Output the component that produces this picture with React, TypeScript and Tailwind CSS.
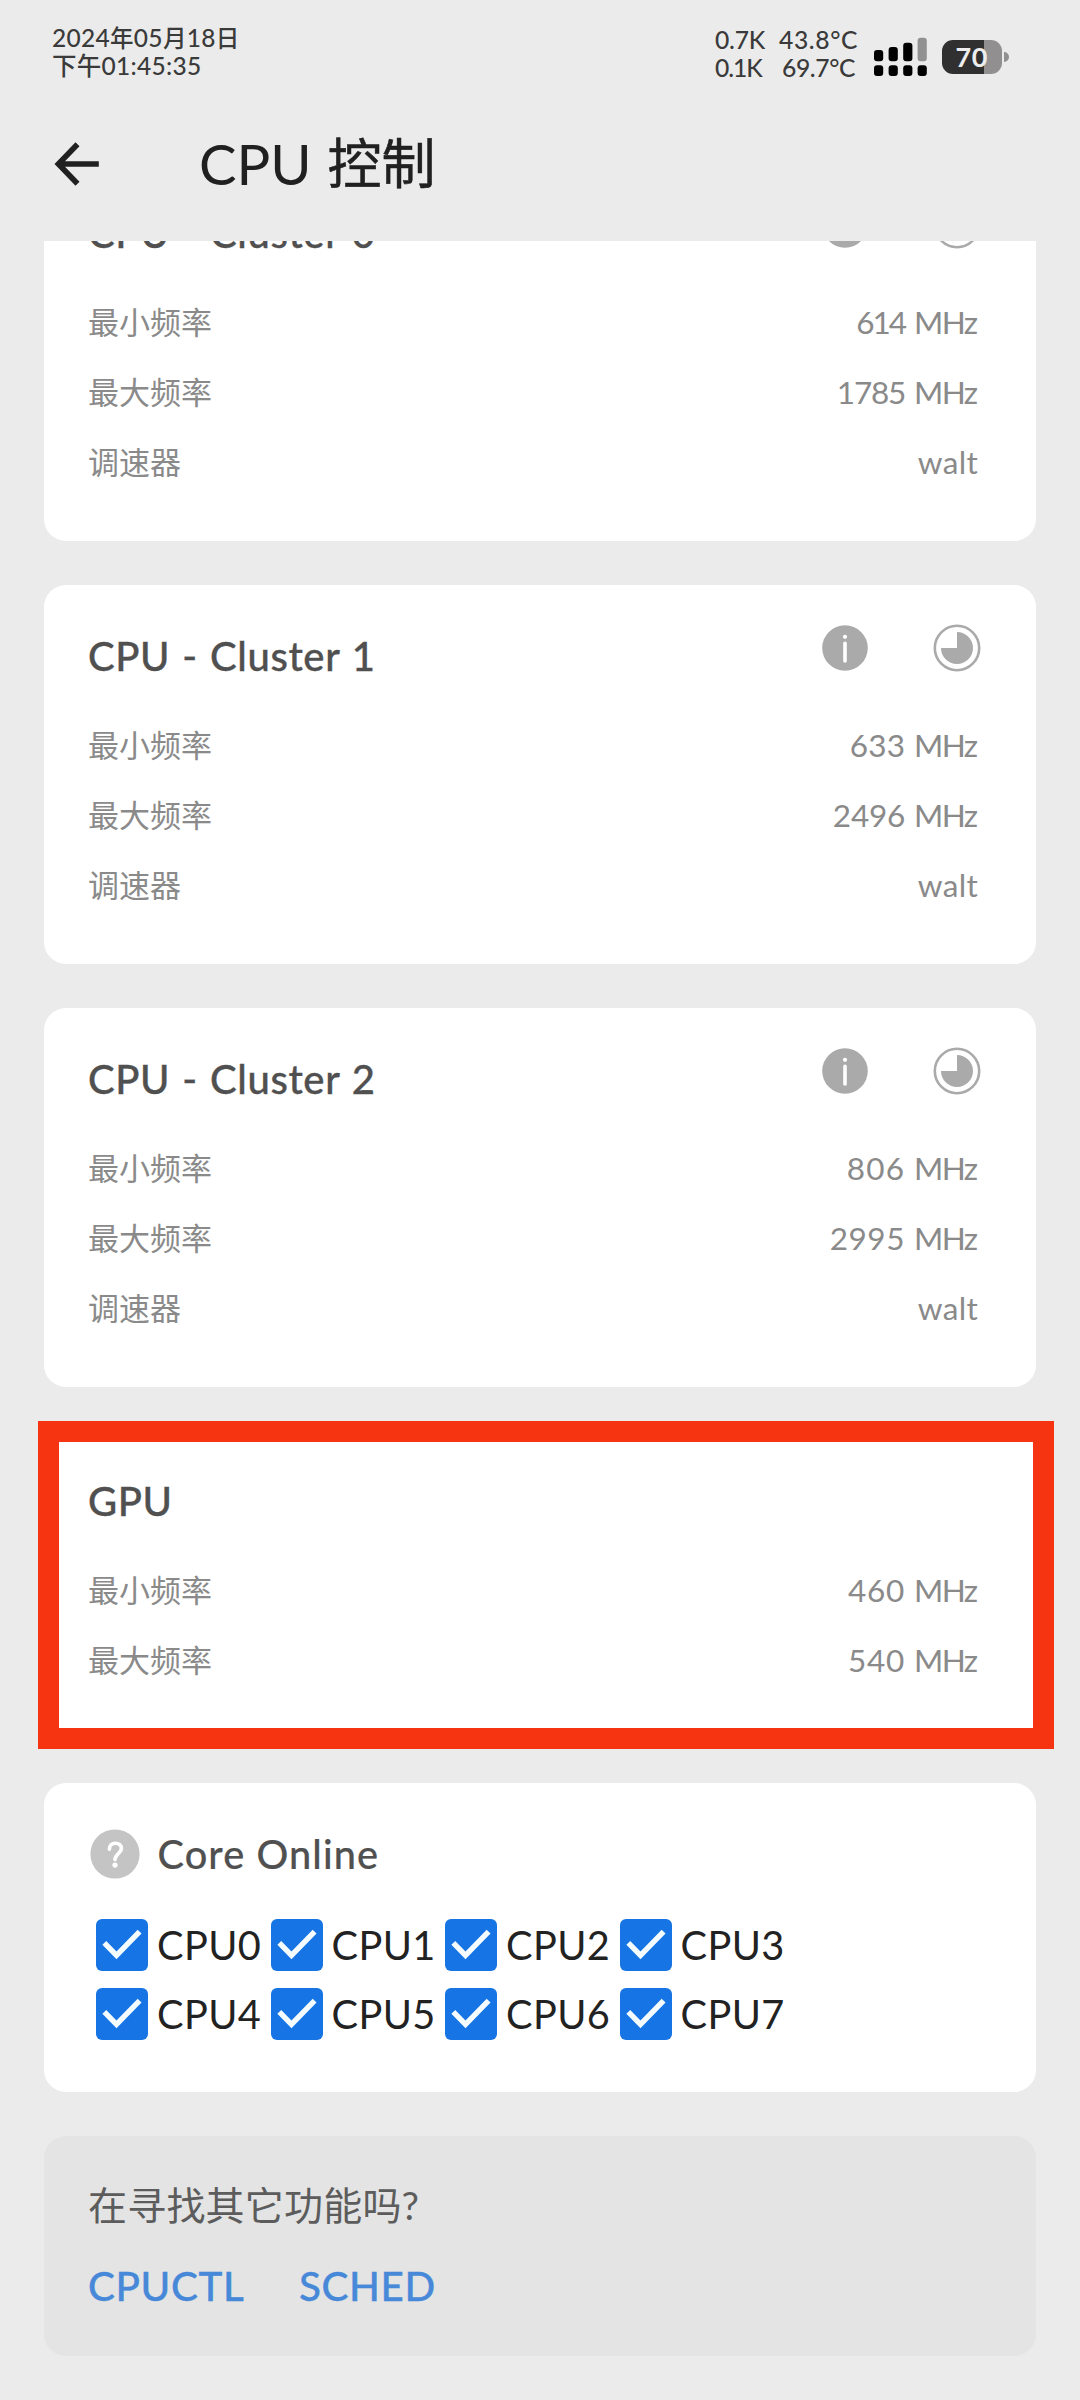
import React from 'react';

type Row = { label: string; value: string; unit?: string; spacing: string };

const clusters: { title: string; rows: Row[] }[] = [
  {
    title: 'CPU - Cluster 0',
    rows: [
      { label: '最小频率', value: '614', unit: 'MHz', spacing: 'tracking-[-2px]' },
      { label: '最大频率', value: '1785', unit: 'MHz', spacing: 'tracking-[-1.2px]' },
      { label: '调速器', value: 'walt', spacing: 'tracking-[0.3px]' },
    ],
  },
  {
    title: 'CPU - Cluster 1',
    rows: [
      { label: '最小频率', value: '633', unit: 'MHz', spacing: 'tracking-[0.2px]' },
      { label: '最大频率', value: '2496', unit: 'MHz', spacing: 'tracking-[-0.2px]' },
      { label: '调速器', value: 'walt', spacing: 'tracking-[0.3px]' },
    ],
  },
  {
    title: 'CPU - Cluster 2',
    rows: [
      { label: '最小频率', value: '806', unit: 'MHz', spacing: 'tracking-[1.2px]' },
      { label: '最大频率', value: '2995', unit: 'MHz', spacing: 'tracking-[0.6px]' },
      { label: '调速器', value: 'walt', spacing: 'tracking-[0.3px]' },
    ],
  },
];

const gpuRows: Row[] = [
  { label: '最小频率', value: '460', unit: 'MHz', spacing: 'tracking-[0.8px]' },
  { label: '最大频率', value: '540', unit: 'MHz', spacing: 'tracking-[0.8px]' },
];

const cores = ['CPU0', 'CPU1', 'CPU2', 'CPU3', 'CPU4', 'CPU5', 'CPU6', 'CPU7'];

function SignalIcon() {
  return (
    <svg width="54" height="40" viewBox="0 0 54 40">
      <rect x="0" y="13" width="9.2" height="11.3" rx="3" />
      <rect x="14.6" y="10" width="9.2" height="14.3" rx="3" />
      <rect x="29.2" y="5.7" width="9.2" height="18.6" rx="3" />
      <rect x="43.6" y="0.7" width="9.2" height="23.6" rx="3" fill="#919191" />
      <rect x="0" y="28.3" width="9.2" height="10.7" rx="3" />
      <rect x="14.6" y="28.3" width="9.2" height="10.7" rx="3" />
      <rect x="29.2" y="28.3" width="9.2" height="10.7" rx="3" />
      <rect x="43.6" y="28.3" width="9.2" height="10.7" rx="3" />
    </svg>
  );
}

function Battery() {
  return (
    <div className="flex items-center">
      <div className="flex h-[34px] w-[59.5px] items-center justify-center rounded-[11px] bg-linear-to-r from-[#303030] from-70% to-[#918f90] to-70% pb-[1px] text-[27px] leading-none font-bold tracking-[0.5px] text-[#ededed]">
        70
      </div>
      <div className="ml-[2.5px] h-[10px] w-[5px] rounded-r-full bg-[#919191]" />
    </div>
  );
}

function StatusBar() {
  return (
    <div className="flex h-[96px] items-start justify-between pr-[71px] pl-[52px] font-medium text-[#3a3a3a]">
      <div className="pt-[24px] text-[24.5px] leading-[28px]">
        <div className="tracking-[0.3px]">
          2024<span className="text-[23.5px]">年</span>05<span className="text-[23.5px]">月</span>18
          <span className="text-[23.5px]">日</span>
        </div>
        <div className="tracking-[0.3px]">下午01:45:35</div>
      </div>
      <div className="flex">
        <div className="w-[64px] pt-[26px] text-[24.7px] leading-[28px] [font-kerning:none]">
          <div className="tracking-[-0.2px]">0.7K</div>
          <div className="tracking-[-1.1px]">0.1K</div>
        </div>
        <div className="w-[95px] pt-[26px] text-[24.7px] leading-[28px]">
          <div className="tracking-[0.6px]">43.8°C</div>
          <div className="pl-[3px] tracking-[-0.4px]">69.7°C</div>
        </div>
        <div className="pt-[37px]">
          <SignalIcon />
        </div>
        <div className="pt-[40px] pl-[14px]">
          <Battery />
        </div>
      </div>
    </div>
  );
}

function InfoIcon() {
  return (
    <svg width="46" height="46" viewBox="0 0 46 46">
      <circle cx="23" cy="23" r="22.8" fill="#aaaaaa" />
      <circle cx="23" cy="11.8" r="2.1" fill="#fff" />
      <path d="M23 18.2V36" stroke="#fff" strokeWidth="3.6" strokeLinecap="round" />
    </svg>
  );
}

function PieIcon() {
  return (
    <svg width="48" height="48" viewBox="0 0 48 48">
      <circle cx="24" cy="24" r="22.2" fill="none" stroke="#aaaaaa" strokeWidth="2.6" />
      <path d="M24 24V8A16 16 0 1 1 8 24Z" fill="#aaaaaa" />
    </svg>
  );
}

function FrequencyRow({ row }: { row: Row }) {
  return (
    <div className="flex h-[70px] items-center justify-between text-[#8a8a8a]">
      <span className="pb-[1px] text-[31px] leading-[40px]">{row.label}</span>
      <span className="flex gap-[9px] text-[31.5px] leading-[40px]">
        <span className={row.spacing}>{row.value}</span>
        {row.unit && <span className="mr-[1.5px] tracking-[-1.6px]">{row.unit}</span>}
      </span>
    </div>
  );
}

function CardTitle({ children }: { children: React.ReactNode }) {
  return (
    <h2 className="text-[40px] leading-[63px] font-medium tracking-[0.6px] text-[#505050] [-webkit-text-stroke:0.35px_#505050] [word-spacing:1.5px]">
      {children}
    </h2>
  );
}

function ClusterCard({ title, rows }: { title: string; rows: Row[] }) {
  return (
    <section className="h-[379px] rounded-[22px] bg-white pt-[39px] pr-[58px] pl-[44px]">
      <div className="mb-[23px] flex h-[63px] items-start justify-between">
        <div className="pt-[1px]">
          <CardTitle>{title}</CardTitle>
        </div>
        <div className="-mr-[3px] flex items-center gap-[65px]">
          <InfoIcon />
          <PieIcon />
        </div>
      </div>
      {rows.map((row) => (
        <FrequencyRow key={row.label} row={row} />
      ))}
    </section>
  );
}

function GpuCard() {
  return (
    <section className="relative -mt-px h-[309px] rounded-[22px] bg-white pt-[39px] pr-[58px] pl-[44px]">
      <div className="mb-[23px] h-[63px] pt-[1px]">
        <CardTitle>GPU</CardTitle>
      </div>
      {gpuRows.map((row) => (
        <FrequencyRow key={row.label} row={row} />
      ))}
      <div className="absolute -top-[9.5px] -right-[18px] -bottom-[9.5px] -left-[6.5px] border-[21px] border-[#f63411]" />
    </section>
  );
}

function CoreCheckbox({ label }: { label: string }) {
  return (
    <label className="flex h-[69px] items-center gap-[9px]">
      <svg width="52" height="52" viewBox="0 0 52 52" className="shrink-0">
        <rect width="52" height="52" rx="6" fill="#1774e4" />
        <path d="M8.3 23.8L20.5 36.4L43.6 12.6" fill="none" stroke="#f4fcff" strokeWidth="5.4" />
      </svg>
      <span className="text-[39.7px] leading-[48px] tracking-[0.4px] text-[#222222]">{label}</span>
    </label>
  );
}

function CoreOnlineCard() {
  return (
    <section className="h-[309px] rounded-[22px] bg-white pt-[46px] pl-[46px]">
      <div className="flex h-[50px] items-center gap-[17.5px]">
        <svg width="50" height="50" viewBox="0 0 50 50">
          <circle cx="25" cy="25" r="24.6" fill="#c4c4c4" />
          <path
            d="M19.4 20.2C19.4 16.4 21.8 14.2 25.4 14.2C29 14.2 31.4 16.4 31.4 19.6C31.4 24 25 25.2 25 30.6"
            fill="none"
            stroke="#fff"
            strokeWidth="3.6"
            strokeLinecap="round"
          />
          <circle cx="25" cy="36.1" r="2.6" fill="#fff" />
        </svg>
        <h2 className="pb-[1px] text-[39.7px] leading-[48px] font-medium tracking-[1.1px] text-[#505050] [-webkit-text-stroke:0.2px_#505050]">
          Core Online
        </h2>
      </div>
      <div className="mt-[31px] ml-[6px] grid w-[698px] grid-cols-4">
        {cores.map((core) => (
          <CoreCheckbox key={core} label={core} />
        ))}
      </div>
    </section>
  );
}

function MoreCard() {
  return (
    <section className="h-[220px] rounded-[22px] bg-[#e4e4e4] pt-[39px] pl-[44px]">
      <p className="text-[39px] leading-[60px] tracking-[0.2px] text-[#5c5c5c]">在寻找其它功能吗?</p>
      <div className="mt-[20.5px] flex gap-[54.5px] text-[40.4px] leading-[60px] font-medium tracking-[0.6px] text-[#4789d8] [-webkit-text-stroke:0.35px_#4789d8]">
        <a>CPUCTL</a>
        <a>SCHED</a>
      </div>
    </section>
  );
}

export default function App() {
  return (
    <div className="flex h-[2400px] w-[1080px] flex-col overflow-hidden bg-[#ebebeb] [font-family:Lato,'Noto_Sans_CJK_SC',sans-serif]">
      <header className="h-[241px] shrink-0">
        <StatusBar />
        <div className="flex h-[136px] items-center pl-[54px]">
          <svg width="46" height="46" viewBox="0 0 46 46" fill="none" stroke="#202020" strokeWidth="5.6">
            <path d="M44.8 23H5M23.5 3.3L4.4 23L23.5 42.7" />
          </svg>
          <h1 className="ml-[99px] flex items-center text-[#202020]">
            <span className="text-[56.2px] leading-[70px]">CPU</span>
            <span className="ml-[16px] text-[54px] leading-[70px] [-webkit-text-stroke:0.5px_#202020]">控制</span>
          </h1>
        </div>
      </header>
      <main className="flex-1 overflow-hidden px-[44px]">
        <div className="-mt-[79px] flex flex-col gap-[44px]">
          {clusters.map((cluster) => (
            <ClusterCard key={cluster.title} {...cluster} />
          ))}
          <GpuCard />
          <CoreOnlineCard />
          <MoreCard />
        </div>
      </main>
    </div>
  );
}
